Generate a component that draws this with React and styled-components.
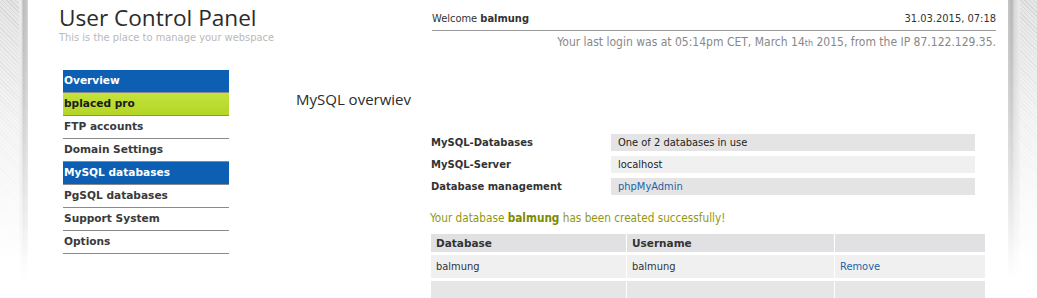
import styled, { createGlobalStyle } from "styled-components";

const Global = createGlobalStyle`
  html, body { margin: 0; padding: 0; }
  body {
    font-family: "DejaVu Sans Condensed", "DejaVu Sans", sans-serif;
    font-size: 11px;
    color: #333;
  }
`;

const Shell = styled.div`
  min-height: 298px;
  padding-left: 28px;
  background:
    linear-gradient(to bottom, rgba(255,255,255,0) 0, rgba(255,255,255,0.6) 120px, #fff 260px),
    repeating-linear-gradient(45deg, #d6d6d6 0 1px, #e6e6e6 1px 3px);
`;

const Page = styled.div`
  position: relative;
  width: 980px;
  min-height: 298px;
  background: #fff;
  padding: 0 12px 0 31px;
  box-sizing: border-box;

  &::before, &::after {
    content: "";
    position: absolute;
    top: 0;
    bottom: 0;
    width: 9px;
    -webkit-mask-image: linear-gradient(to bottom, #000 0, transparent 280px);
    mask-image: linear-gradient(to bottom, #000 0, transparent 280px);
  }
  &::before {
    left: -9px;
    background: linear-gradient(to right, #eeeeee 0, #e2e2e2 3px, #b8b8b8 4px, #c8c8c8 8px, #dadada 9px);
  }
  &::after {
    right: -12px;
    width: 12px;
    background: linear-gradient(to right, #c6c6c6 0, #b4b4b4 4px, #d6d6d6 6px, #ececec 12px);
  }
`;

const Header = styled.header`
  display: flex;
  justify-content: space-between;
  padding-top: 5px;
  height: 64px;
  box-sizing: border-box;
`;

const Brand = styled.div``;

const Title = styled.h1`
  margin: 0;
  font-family: "Open Sans", sans-serif;
  font-weight: 400;
  font-size: 22.6px;
  line-height: 26px;
  color: #2b2b2b;
`;

const Subtitle = styled.div`
  color: #b9b9b9;
  font-size: 11px;
`;

const Account = styled.div`
  width: 564px;
  padding-top: 7px;
`;

const AccountTop = styled.div`
  display: flex;
  justify-content: space-between;
  padding: 0 0 4px;
  border-bottom: 1px solid #9a9a9a;
  font-size: 11px;
  color: #333;
  line-height: 14px;
`;

const LastLogin = styled.div`
  margin-top: 4px;
  text-align: right;
  color: #888;
  font-size: 12px;
  line-height: 15px;
  sup { font-size: 9px; vertical-align: baseline; }
`;

const Body = styled.div`
  display: flex;
  padding-top: 6px;
`;

const Sidebar = styled.nav`
  width: 166px;
  margin-left: 4px;
  display: flex;
  flex-direction: column;
`;

const NavItem = styled.div`
  height: 22px;
  line-height: 20px;
  padding-left: 1px;
  border-bottom: 1px solid #8a8a8a;
  font-family: "DejaVu Sans", sans-serif;
  font-weight: bold;
  font-size: 10.6px;
  color: ${p => (p.$tone === "blue" ? "#fff" : p.$tone === "lime" ? "#1a1a1a" : "#3a3a3a")};
  background: ${p =>
    p.$tone === "blue"
      ? "#0c5fb3"
      : p.$tone === "lime"
      ? "linear-gradient(to bottom, #c4e23c, #b3d626)"
      : "#fff"};
`;

const Content = styled.main`
  flex: 1;
  padding-left: 67px;
`;

const Heading = styled.h2`
  margin: 19px 0 0;
  font-family: "Open Sans", sans-serif;
  font-weight: 400;
  font-size: 15px;
  line-height: 20px;
  color: #2b2b2b;
`;

const Panel = styled.div`
  margin-left: 135px;
  margin-top: 25px;
  width: 554px;
`;

const InfoGrid = styled.div`
  display: grid;
  grid-template-columns: 180px 364px;
  row-gap: 5px;
`;

const Label = styled.div`
  font-family: "DejaVu Sans", sans-serif;
  font-weight: bold;
  font-size: 10px;
  line-height: 17px;
  color: #333;
`;

const Value = styled.div`
  height: 17px;
  line-height: 17px;
  padding-left: 7px;
  background: ${p => (p.$light ? "#f0f0f0" : "#e4e4e4")};
  color: ${p => (p.$link ? "#1f5fa8" : "#222")};
`;

const Success = styled.div`
  margin-top: 16px;
  margin-left: -1px;
  font-size: 11.7px;
  color: #8f9810;
  b { color: #7d8a00; }
`;

const Table = styled.div`
  margin-top: 9px;
  display: grid;
  grid-template-columns: 195px 207px 150px;
  row-gap: 3px;
  column-gap: 1px;
`;

const Cell = styled.div`
  height: ${p => (p.$head ? "18px" : "23px")};
  line-height: ${p => (p.$head ? "18px" : "23px")};
  padding-left: 5px;
  background: ${p => (p.$head ? "#e1e1e3" : p.$light ? "#f0f0f0" : "#e6e6e6")};
  font-family: ${p => (p.$head ? `"DejaVu Sans", sans-serif` : "inherit")};
  font-weight: ${p => (p.$head ? "bold" : "normal")};
  font-size: ${p => (p.$head ? "10.5px" : "11px")};
  color: ${p => (p.$link ? "#1f5fa8" : "#333")};
`;

const nav = [
  ["Overview", "blue"],
  ["bplaced pro", "lime"],
  ["FTP accounts"],
  ["Domain Settings"],
  ["MySQL databases", "blue"],
  ["PgSQL databases"],
  ["Support System"],
  ["Options"],
];

export default function App() {
  return (
    <Shell>
      <Global />
      <Page>
        <Header>
          <Brand>
            <Title>User Control Panel</Title>
            <Subtitle>This is the place to manage your webspace</Subtitle>
          </Brand>
          <Account>
            <AccountTop>
              <span>Welcome <b>balmung</b></span>
              <span>31.03.2015, 07:18</span>
            </AccountTop>
            <LastLogin>
              Your last login was at 05:14pm CET, March 14<sup>th</sup> 2015, from the IP 87.122.129.35.
            </LastLogin>
          </Account>
        </Header>
        <Body>
          <Sidebar>
            {nav.map(([label, tone]) => (
              <NavItem key={label} $tone={tone}>{label}</NavItem>
            ))}
          </Sidebar>
          <Content>
            <Heading>MySQL overwiev</Heading>
            <Panel>
              <InfoGrid>
                <Label>MySQL-Databases</Label>
                <Value>One of 2 databases in use</Value>
                <Label>MySQL-Server</Label>
                <Value $light>localhost</Value>
                <Label>Database management</Label>
                <Value $link>phpMyAdmin</Value>
              </InfoGrid>
              <Success>
                Your database <b>balmung</b> has been created successfully!
              </Success>
              <Table>
                <Cell $head>Database</Cell>
                <Cell $head>Username</Cell>
                <Cell $head />
                <Cell $light>balmung</Cell>
                <Cell $light>balmung</Cell>
                <Cell $light $link>Remove</Cell>
                <Cell />
                <Cell />
                <Cell />
              </Table>
            </Panel>
          </Content>
        </Body>
      </Page>
    </Shell>
  );
}
